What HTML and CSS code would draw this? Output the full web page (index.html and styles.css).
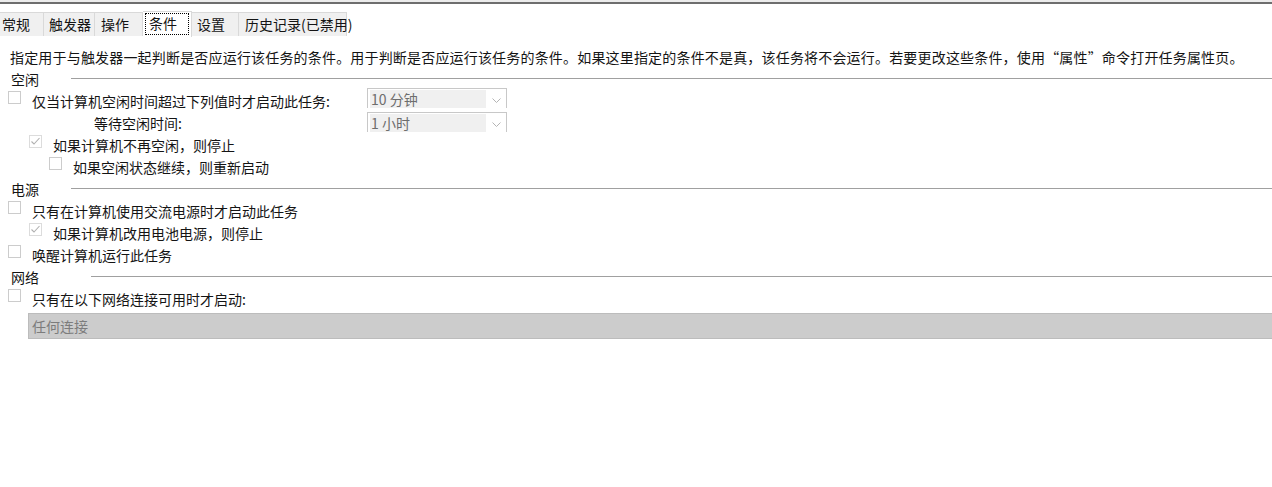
FILE: index.html
```html
<!DOCTYPE html>
<html lang="zh-CN">
<head>
<meta charset="utf-8">
<title>条件</title>
<link rel="stylesheet" href="styles.css">
</head>
<body>
<div class="top-band"></div>
<div class="tabs">
  <div class="tab t1">常规</div>
  <div class="tab t2">触发器</div>
  <div class="tab t3">操作</div>
  <div class="tab t4 active"><span class="focus">条件</span></div>
  <div class="tab t5">设置</div>
  <div class="tab t6">历史记录(已禁用)</div>
</div>
<div class="content">
  <div class="desc">指定用于与触发器一起判断是否应运行该任务的条件。用于判断是否应运行该任务的条件。如果这里指定的条件不是真，该任务将不会运行。若要更改这些条件，使用“属性”命令打开任务属性页。</div>

  <div class="group"><span class="group-title">空闲</span><span class="rule"></span></div>
  <div class="row">
    <span class="cb"></span>
    <span class="label wide">仅当计算机空闲时间超过下列值时才启动此任务:</span>
    <span class="combo"><span class="combo-val">10 分钟</span><span class="chev"><svg width="9" height="6" viewBox="0 0 9 6"><path d="M0.5 0.5 L4.5 4.5 L8.5 0.5" fill="none" stroke="#b4b4b4" stroke-width="1"/></svg></span></span>
  </div>
  <div class="row">
    <span class="label wait">等待空闲时间:</span>
    <span class="combo c2"><span class="combo-val">1 小时</span><span class="chev"><svg width="9" height="6" viewBox="0 0 9 6"><path d="M0.5 0.5 L4.5 4.5 L8.5 0.5" fill="none" stroke="#b4b4b4" stroke-width="1"/></svg></span></span>
  </div>
  <div class="row lvl1">
    <span class="cb checked"><svg width="11" height="11" viewBox="0 0 11 11"><path d="M1.5 5.5 L4 8 L9.5 2" fill="none" stroke="#b0b0b0" stroke-width="1.1"/></svg></span>
    <span class="label">如果计算机不再空闲，则停止</span>
  </div>
  <div class="row lvl2">
    <span class="cb"></span>
    <span class="label">如果空闲状态继续，则重新启动</span>
  </div>

  <div class="group"><span class="group-title">电源</span><span class="rule"></span></div>
  <div class="row">
    <span class="cb"></span>
    <span class="label">只有在计算机使用交流电源时才启动此任务</span>
  </div>
  <div class="row lvl1">
    <span class="cb checked"><svg width="11" height="11" viewBox="0 0 11 11"><path d="M1.5 5.5 L4 8 L9.5 2" fill="none" stroke="#b0b0b0" stroke-width="1.1"/></svg></span>
    <span class="label">如果计算机改用电池电源，则停止</span>
  </div>
  <div class="row">
    <span class="cb"></span>
    <span class="label">唤醒计算机运行此任务</span>
  </div>

  <div class="group net"><span class="group-title">网络</span><span class="rule"></span></div>
  <div class="row">
    <span class="cb"></span>
    <span class="label">只有在以下网络连接可用时才启动:</span>
  </div>
  <div class="netbox">任何连接</div>
</div>
</body>
</html>
```

FILE: styles.css
```css
* { box-sizing: border-box; }
html, body { margin: 0; padding: 0; background: #ffffff; }
body {
  width: 1272px;
  height: 487px;
  overflow: hidden;
  font-family: "Noto Sans CJK SC", "Noto Sans", sans-serif;
  font-size: 14px;
  color: #141414;
}
.top-band {
  height: 11px;
  background: #ffffff;
  border-top: 2px solid #ececec;
  box-shadow: inset 0 2px 0 #6e6e6e;
}
.tabs {
  display: flex;
  align-items: flex-end;
  height: 25px;
  width: 348px;
}
.tab {
  height: 24px;
  line-height: 22px;
  background: #f0f0f0;
  border-top: 1px solid #d9d9d9;
  border-right: 1px solid #d9d9d9;
  padding-left: 5px;
  white-space: nowrap;
}
.t1 { width: 44px; padding-left: 2px; }
.t2 { width: 51px; }
.t3 { width: 48px; padding-left: 6px; }
.t4 { width: 49px; }
.t5 { width: 47px; }
.t6 { width: 108px; padding-left: 6px; }
.tab.active {
  height: 26px;
  background: #ffffff;
  border-top: 1px solid #d9d9d9;
  padding: 1px 2px 1px 2px;
  margin-bottom: -1px;
  position: relative;
}
.focus {
  display: block;
  height: 22px;
  line-height: 18px;
  border: 1px dotted #000;
  padding-left: 3px;
}
.content {
  padding: 10px 0 0 8px;
}
.desc {
  height: 22px;
  line-height: 22px;
  padding-left: 2px;
  letter-spacing: 0.18px;
  white-space: nowrap;
}
.group {
  display: flex;
  align-items: center;
  height: 22px;
}
.group-title {
  padding-left: 3px;
  line-height: 22px;
}
.rule {
  flex: 1;
  height: 1px;
  background: #a0a0a0;
  margin-left: 32px;
  margin-top: -2px;
}
.group.net .rule { margin-left: 52px; }
.row {
  display: flex;
  align-items: flex-start;
  height: 22px;
  line-height: 22px;
}
.cb {
  width: 13px;
  height: 13px;
  border: 1px solid #cccccc;
  margin-top: 1px;
  margin-right: 11px;
  flex: none;
  display: flex;
  align-items: center;
  justify-content: center;
  background: #fff;
}
.cb.checked { border-color: #dcdcdc; }
.lvl1 { padding-left: 21px; }
.lvl2 { padding-left: 41px; }
.label { white-space: nowrap; }
.label.wide { width: 335px; }
.label.wait { padding-left: 86px; width: 359px; }
.combo {
  width: 140px;
  height: 20px;
  margin-top: -2px;
  border: 1px solid #c8c8c8;
  border-bottom: none;
  display: flex;
  padding: 1px 0 0 2px;
}
.combo.c2 { margin-top: 0; }
.combo-val {
  width: 116px;
  background: #f0f0f0;
  color: #6d6d6d;
  line-height: 19px;
  padding-left: 1px;
}
.chev {
  flex: 1;
  display: flex;
  align-items: center;
  justify-content: center;
  padding-top: 4px;
}
.netbox {
  margin-left: 20px;
  margin-top: 3px;
  height: 26px;
  line-height: 25px;
  background: #cccccc;
  border: 1px solid #bcbcbc;
  border-right: none;
  color: #7c7c7c;
  padding-left: 3px;
}
```
